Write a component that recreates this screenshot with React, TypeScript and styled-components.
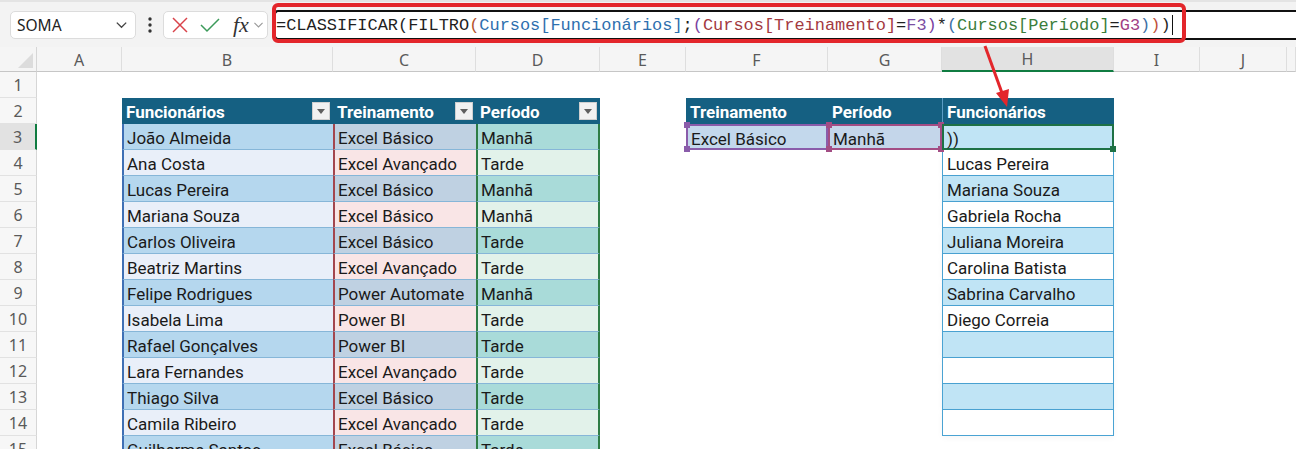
import React from 'react';
import styled, { createGlobalStyle } from 'styled-components';

const GlobalStyle = createGlobalStyle`
  html, body {
    margin: 0;
    padding: 0;
    background: #ffffff;
    overflow: hidden;
  }
`;

const Page = styled.div`
  position: relative;
  width: 1296px;
  height: 449px;
  overflow: hidden;
  font-family: Roboto, 'Noto Sans', sans-serif;
`;

/* ---------- formula bar ---------- */

const Toolbar = styled.div`
  display: flex;
  align-items: center;
  height: 47px;
  padding-left: 10px;
  background: #f3f3f3;
  border-top: 2px solid #e4e4e4;
  box-sizing: border-box;
`;

const NameBox = styled.div`
  display: flex;
  align-items: center;
  justify-content: space-between;
  width: 126px;
  height: 28px;
  padding: 0 6px 0 6px;
  box-sizing: border-box;
  background: #fff;
  border: 1px solid #dcdcdc;
  border-radius: 5px;
  font-family: 'Noto Sans', sans-serif;
  font-size: 15.5px;
  color: #222;
`;

const Dots = styled.div`
  display: flex;
  justify-content: center;
  width: 27px;
`;

const FnBox = styled.div`
  display: flex;
  align-items: center;
  gap: 11px;
  width: 105px;
  height: 28px;
  padding-left: 7px;
  box-sizing: border-box;
  background: #fff;
  border: 1px solid #dcdcdc;
  border-radius: 5px;
`;

const Fx = styled.span`
  font-family: 'Liberation Serif', serif;
  font-style: italic;
  font-size: 22px;
  color: #333;
  margin-left: 2px;
  margin-right: -8px;
`;

const FormulaInput = styled.div`
  display: flex;
  align-items: center;
  flex: 1;
  height: 30px;
  margin-left: 6px;
  margin-right: -4px;
  padding: 1px 0 0 0;
  box-sizing: border-box;
  background: #fff;
  border: 2px solid #111;
  border-right: none;
  border-radius: 4px 0 0 4px;
  font-family: 'Liberation Mono', monospace;
  font-size: 16.95px;
  white-space: pre;
  color: #1f1f1f;
`;

const Tok = styled.span<{ $c?: string }>`
  color: ${p => p.$c || '#1f1f1f'};
`;

const Caret = styled.span`
  display: inline-block;
  width: 1px;
  height: 20px;
  margin-left: 1px;
  background: #111;
`;

const Highlight = styled.div`
  position: absolute;
  left: 272px;
  top: 3px;
  width: 914px;
  height: 40px;
  box-sizing: border-box;
  border: 4px solid #e3262b;
  border-radius: 6px;
  pointer-events: none;
`;

const ArrowLayer = styled.svg`
  position: absolute;
  left: 0;
  top: 0;
  pointer-events: none;
`;

/* ---------- grid ---------- */

const Sheet = styled.div`
  display: grid;
  grid-template-columns: 37px 85px 211px 143px 124px 86px 142px 114px 172px 86px 87px 1fr;
  grid-template-rows: 25px repeat(15, 26px);
`;

const Corner = styled.div`
  position: relative;
  background: #f5f5f5;
  border-right: 1px solid #d6d6d6;
  border-bottom: 1px solid #c6c6c6;
  &::after {
    content: '';
    position: absolute;
    right: 3px;
    bottom: 3px;
    border-left: 15px solid transparent;
    border-bottom: 15px solid #dcdcdc;
  }
`;

const ColHead = styled.div<{ $active?: boolean }>`
  display: flex;
  align-items: center;
  justify-content: center;
  box-sizing: border-box;
  padding-top: 1px;
  background: ${p => (p.$active ? '#e2e2e2' : '#f5f5f5')};
  border-right: 1px solid #dedede;
  border-bottom: ${p => (p.$active ? '2px solid #107c41' : '1px solid #c6c6c6')};
  font-family: 'Noto Sans', sans-serif;
  font-size: 16px;
  color: #5a5a5a;
`;

const RowHead = styled.div<{ $active?: boolean }>`
  display: flex;
  align-items: center;
  justify-content: center;
  box-sizing: border-box;
  background: ${p => (p.$active ? '#e2e2e2' : '#f7f7f7')};
  border-bottom: 1px solid #e2e2e2;
  border-right: ${p => (p.$active ? '2px solid #107c41' : '1px solid #d6d6d6')};
  font-family: 'Noto Sans', sans-serif;
  font-size: 16px;
  color: #5a5a5a;
`;

const Blank = styled.div``;

const THead = styled.div<{ $divider?: boolean }>`
  display: flex;
  align-items: center;
  justify-content: space-between;
  box-sizing: border-box;
  padding: 2px 3px 0 4px;
  background: #156082;
  border-left: ${p => (p.$divider ? '1px solid #5a9cc4' : 'none')};
  color: #fff;
  font-weight: 700;
  font-size: 17px;
`;

const FilterBtn = styled.div`
  display: flex;
  align-items: center;
  justify-content: center;
  width: 18px;
  height: 18px;
  margin-top: -2px;
  background: #f1f1f1;
  border: 1px solid #cfcfcf;
  box-sizing: border-box;
`;

const DataCell = styled.div<{ $bg: string; $edge: string; $right?: boolean }>`
  display: flex;
  align-items: center;
  box-sizing: border-box;
  padding: 3px 0 0 3px;
  background: ${p => p.$bg};
  border-left: 2px solid ${p => p.$edge};
  border-right: ${p => (p.$right ? `2px solid ${p.$edge}` : 'none')};
  border-bottom: 1px solid #86b6d8;
  font-size: 17px;
  color: #1a1a1a;
  white-space: nowrap;
  overflow: hidden;
`;

const RefCell = styled.div<{ $edge: string; $bg: string }>`
  position: relative;
  display: flex;
  align-items: center;
  box-sizing: border-box;
  padding: 3px 0 0 3px;
  background: ${p => p.$bg};
  border: 2px solid ${p => p.$edge};
  font-size: 17px;
  color: #1a1a1a;
`;

const Knob = styled.span<{ $c: string; $pos: string }>`
  position: absolute;
  width: 6px;
  height: 6px;
  background: ${p => p.$c};
  ${p => p.$pos};
`;

const ActiveCell = styled.div`
  position: relative;
  display: flex;
  align-items: center;
  box-sizing: border-box;
  padding: 3px 0 0 3px;
  background: #c0e4f5;
  border: 2px solid #1e7145;
  font-size: 17px;
  color: #1a1a1a;
`;

const SpillCell = styled.div<{ $band: boolean }>`
  display: flex;
  align-items: center;
  box-sizing: border-box;
  padding: 3px 0 0 4px;
  background: ${p => (p.$band ? '#c0e4f5' : '#ffffff')};
  border-left: 1px solid #4aa3d3;
  border-right: 1px solid #4aa3d3;
  border-bottom: 1px solid #4aa3d3;
  font-size: 17px;
  color: #1a1a1a;
  box-shadow: 0 2px 6px rgba(0, 0, 0, 0.04);
`;

const COLS = ['A', 'B', 'C', 'D', 'E', 'F', 'G', 'H', 'I', 'J', ''];

const names = [
  'João Almeida', 'Ana Costa', 'Lucas Pereira', 'Mariana Souza', 'Carlos Oliveira',
  'Beatriz Martins', 'Felipe Rodrigues', 'Isabela Lima', 'Rafael Gonçalves',
  'Lara Fernandes', 'Thiago Silva', 'Camila Ribeiro', 'Guilherme Santos',
];
const trainings = [
  'Excel Básico', 'Excel Avançado', 'Excel Básico', 'Excel Básico', 'Excel Básico',
  'Excel Avançado', 'Power Automate', 'Power BI', 'Power BI', 'Excel Avançado',
  'Excel Básico', 'Excel Avançado', 'Excel Básico',
];
const periods = [
  'Manhã', 'Tarde', 'Manhã', 'Manhã', 'Tarde', 'Tarde', 'Manhã',
  'Tarde', 'Tarde', 'Tarde', 'Tarde', 'Tarde', 'Tarde',
];
const spill = [
  'Lucas Pereira', 'Mariana Souza', 'Gabriela Rocha', 'Juliana Moreira',
  'Carolina Batista', 'Sabrina Carvalho', 'Diego Correia', '', '', '', '',
];

const Chevron = ({ size = 14, color = '#444' }: { size?: number; color?: string }) => (
  <svg width={size} height={size} viewBox="0 0 16 16">
    <polyline points="3,6 8,11 13,6" fill="none" stroke={color} strokeWidth="1.4" />
  </svg>
);

const FilterArrow = () => (
  <svg width="8" height="5" viewBox="0 0 8 5">
    <polygon points="0,0 8,0 4,5" fill="#5f5f5f" />
  </svg>
);

const Filter = () => (
  <FilterBtn>
    <FilterArrow />
  </FilterBtn>
);

const formula: [string, string?][] = [
  ['=CLASSIFICAR(FILTRO'],
  ['(', '#b5532b'],
  ['Cursos[Funcionários]', '#2e6fae'],
  [';'],
  ['(', '#7a3fa0'],
  ['Cursos[Treinamento]', '#a3393f'],
  ['='],
  ['F3', '#7b4fa3'],
  [')', '#7a3fa0'],
  ['*'],
  ['(', '#3d6fa5'],
  ['Cursos[Período]', '#3b7d3b'],
  ['='],
  ['G3', '#a23f86'],
  [')', '#3d6fa5'],
  [')', '#c0503a'],
  [')'],
];

function renderCell(row: number, col: number) {
  const key = `${row}-${col}`;
  const i = row - 3;
  const band = row % 2 === 1;

  if (row === 2) {
    if (col === 1) return <THead key={key}>Funcionários<Filter /></THead>;
    if (col === 2) return <THead key={key}>Treinamento<Filter /></THead>;
    if (col === 3) return <THead key={key}>Período<Filter /></THead>;
    if (col === 5) return <THead key={key}>Treinamento</THead>;
    if (col === 6) return <THead key={key}>Período</THead>;
    if (col === 7) return <THead key={key} $divider>Funcionários</THead>;
  }

  if (row >= 3) {
    if (col === 1)
      return (
        <DataCell key={key} $bg={band ? '#b5d7ee' : '#e9eff9'} $edge="#3f70b5">
          {names[i]}
        </DataCell>
      );
    if (col === 2)
      return (
        <DataCell key={key} $bg={band ? '#bfd1e2' : '#f9e5e6'} $edge="#a3464e">
          {trainings[i]}
        </DataCell>
      );
    if (col === 3)
      return (
        <DataCell key={key} $bg={band ? '#a9dbd9' : '#e2f2ea'} $edge="#2e7d46" $right>
          {periods[i]}
        </DataCell>
      );
  }

  if (row === 3) {
    if (col === 5)
      return (
        <RefCell key={key} $edge="#8a5caa" $bg="#c3d8ec">
          Excel Básico
          <Knob $c="#8a5caa" $pos="left:-4px;top:-4px;" />
          <Knob $c="#8a5caa" $pos="left:-4px;bottom:-4px;" />
        </RefCell>
      );
    if (col === 6)
      return (
        <RefCell key={key} $edge="#a34d84" $bg="#c4d6ea">
          Manhã
          <Knob $c="#a34d84" $pos="left:-4px;top:-4px;" />
          <Knob $c="#a34d84" $pos="left:-4px;bottom:-4px;" />
          <Knob $c="#a34d84" $pos="right:-4px;top:-4px;" />
          <Knob $c="#a34d84" $pos="right:-4px;bottom:-4px;" />
        </RefCell>
      );
    if (col === 7)
      return (
        <ActiveCell key={key}>
          ))
          <Knob $c="#1e7145" $pos="right:-4px;bottom:-4px;" />
        </ActiveCell>
      );
  }

  if (row >= 4 && row <= 14 && col === 7) {
    return (
      <SpillCell key={key} $band={band}>
        {spill[row - 4]}
      </SpillCell>
    );
  }

  return <Blank key={key} />;
}

const App: React.FC = () => {
  const rows = Array.from({ length: 15 }, (_, k) => k + 1);

  return (
    <Page>
      <GlobalStyle />
      <Toolbar>
        <NameBox>
          SOMA
          <Chevron size={15} />
        </NameBox>
        <Dots>
          <svg width="4" height="16" viewBox="0 0 4 16">
            <circle cx="2" cy="2" r="1.7" fill="#333" />
            <circle cx="2" cy="8" r="1.7" fill="#333" />
            <circle cx="2" cy="14" r="1.7" fill="#333" />
          </svg>
        </Dots>
        <FnBox>
          <svg width="18" height="18" viewBox="0 0 18 18">
            <line x1="2" y1="2" x2="16" y2="16" stroke="#d9434a" strokeWidth="1.5" />
            <line x1="16" y1="2" x2="2" y2="16" stroke="#d9434a" strokeWidth="1.5" />
          </svg>
          <svg width="20" height="18" viewBox="0 0 20 18">
            <polyline points="1,9 7,15 19,3" fill="none" stroke="#3c9a5a" strokeWidth="1.5" />
          </svg>
          <Fx>fx</Fx>
          <Chevron size={13} color="#9a9a9a" />
        </FnBox>
        <FormulaInput>
          {formula.map(([t, c], k) => (
            <Tok key={k} $c={c}>
              {t}
            </Tok>
          ))}
          <Caret />
        </FormulaInput>
      </Toolbar>

      <Sheet>
        <Corner />
        {COLS.map(c => (
          <ColHead key={c || 'K'} $active={c === 'H'}>
            {c}
          </ColHead>
        ))}
        {rows.map(r => (
          <React.Fragment key={r}>
            <RowHead $active={r === 3}>{r}</RowHead>
            {COLS.map((_, c) => renderCell(r, c))}
          </React.Fragment>
        ))}
      </Sheet>

      <Highlight />
      <ArrowLayer width="1296" height="449">
        <line x1="985" y1="46" x2="1002" y2="93" stroke="#e3262b" strokeWidth="3" />
        <polygon points="1007,107 996,93 1009,89" fill="#e3262b" />
      </ArrowLayer>
    </Page>
  );
};

export default App;
